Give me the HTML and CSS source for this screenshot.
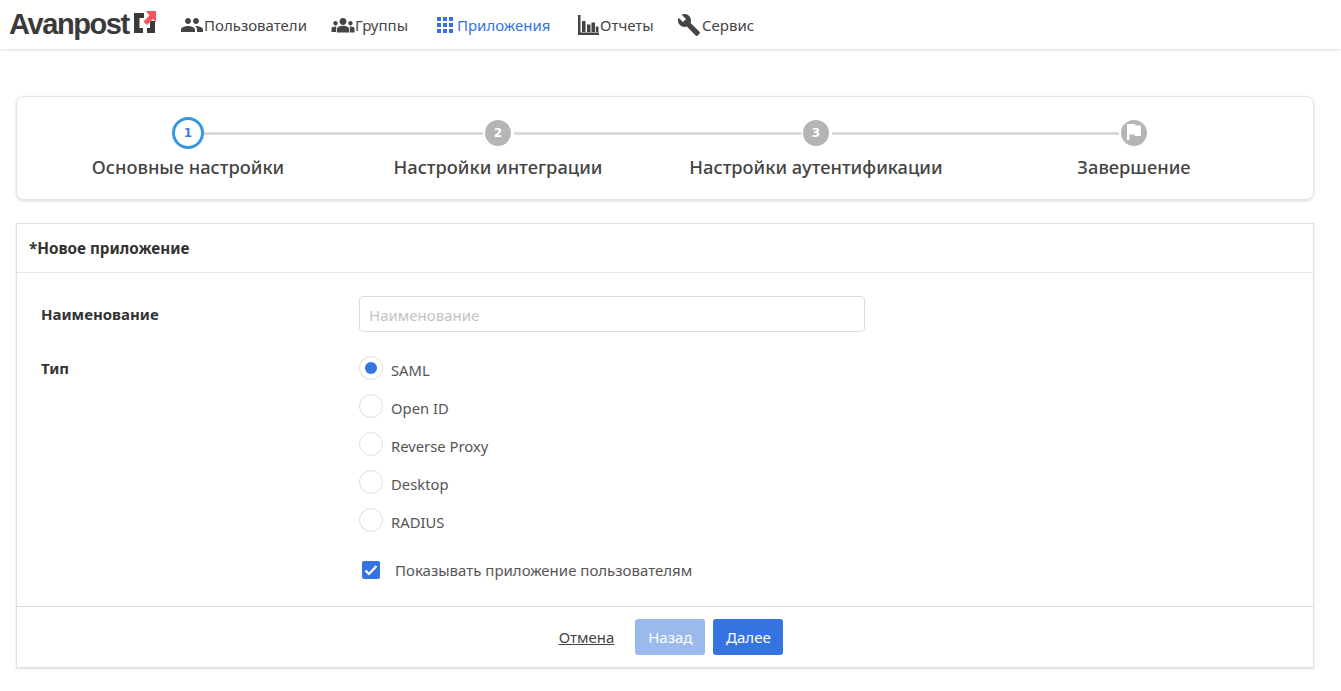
FILE: index.html
```html
<!DOCTYPE html>
<html lang="ru">
<head>
<meta charset="utf-8">
<title>Avanpost</title>
<link rel="stylesheet" href="styles.css">
</head>
<body>
<header class="topbar">
  <a class="logo"><span class="logo-text">Avanpost</span>
    <svg class="logo-mark" width="24" height="24" viewBox="0 0 24 24">
      <path fill="#3a3a3a" d="M1 3h10v5H6.500v10H10v5H1zM14 23v-5h3v-7h5v12z"/>
      <path fill="#f4525c" d="M13 1h10v11l-3-3-6 6-3.500-3.500 6-6z"/>
    </svg>
  </a>
  <nav class="nav">
    <a class="nav-item users">
      <svg width="24" height="24" viewBox="0 0 24 24"><path fill="#444" d="M16 11c1.660 0 2.990-1.340 2.990-3S17.660 5 16 5s-3 1.340-3 3 1.340 3 3 3zm-8 0c1.660 0 2.990-1.340 2.990-3S9.660 5 8 5 5 6.340 5 8s1.340 3 3 3zm0 2c-2.330 0-7 1.170-7 3.500V19h14v-2.500C15 14.170 10.330 13 8 13zm8 0c-.29 0-.62.020-.97.050 1.160.84 1.970 1.970 1.970 3.450V19h6v-2.500c0-2.330-4.670-3.500-7-3.500z"/></svg>
      <span>Пользователи</span>
    </a>
    <a class="nav-item groups">
      <svg width="26" height="24" viewBox="0 0 26 24"><path fill="#444" d="M13 12.800c1.700 0 3.200.4 4.400.95 1.100.5 1.800 1.600 1.800 2.850V19.500H6.800v-2.900c0-1.250.7-2.350 1.800-2.850 1.200-.55 2.700-.95 4.400-.95zM5.500 12.500c1.200 0 2.200-1 2.200-2.200S6.700 8 5.500 8s-2.200 1-2.200 2.300 1 2.200 2.200 2.200zm1.100 1.100c-.35-.05-.7-.1-1.100-.1-1 0-1.900.2-2.800.6-.75.3-1.200 1-1.200 1.800v3.100h4.500v-2.600c0-1.050.3-2 .6-2.800zM20.500 12.500c1.200 0 2.200-1 2.200-2.200S21.700 8 20.500 8s-2.200 1-2.200 2.300 1 2.200 2.200 2.200zm4 3.400c0-.8-.45-1.500-1.200-1.800-.9-.4-1.800-.6-2.800-.6-.4 0-.75.05-1.100.1.300.8.600 1.750.600 2.800v3.100h4.500zM13 5c1.930 0 3.500 1.570 3.500 3.500S14.930 12 13 12 9.500 10.430 9.500 8.500 11.070 5 13 5z"/></svg>
      <span>Группы</span>
    </a>
    <a class="nav-item apps active">
      <svg width="18" height="18" viewBox="0 0 18 18"><path fill="#3573e0" d="M1 1h4v4H1zM7 1h4v4H7zM13 1h4v4h-4zM1 7h4v4H1zM7 7h4v4H7zM13 7h4v4h-4zM1 13h4v4H1zM7 13h4v4H7zM13 13h4v4h-4z"/></svg>
      <span>Приложения</span>
    </a>
    <a class="nav-item reports">
      <svg width="22" height="22" viewBox="0 0 22 22"><path fill="#444" d="M1 1h2.500v17.500H22V21H1zM5 7h3.500v11H5zM10 10.500h3.500V18H10zM14.500 8.500H18V18h-3.500zM18.800 12.500H21.500V18h-2.700z"/></svg>
      <span>Отчеты</span>
    </a>
    <a class="nav-item service">
      <svg width="24" height="24" viewBox="0 0 24 24"><path fill="#444" d="M22.700 19l-9.100-9.100c.9-2.300.4-5-1.500-6.900-2-2-5-2.400-7.400-1.300L9 6 6 9 1.600 4.700C.4 7.100.9 10.100 2.900 12.100c1.900 1.900 4.600 2.400 6.900 1.500l9.100 9.100c.4.4 1 .4 1.400 0l2.300-2.300c.5-.4.5-1.100.1-1.400z"/></svg>
      <span>Сервис</span>
    </a>
  </nav>
</header>

<main class="page">
  <section class="wizard">
    <div class="step step-1">
      <div class="track"><span class="dot current">1</span></div>
      <div class="step-label">Основные настройки</div>
    </div>
    <div class="step step-2">
      <div class="track"><span class="dot">2</span></div>
      <div class="step-label">Настройки интеграции</div>
    </div>
    <div class="step step-3">
      <div class="track"><span class="dot">3</span></div>
      <div class="step-label">Настройки аутентификации</div>
    </div>
    <div class="step step-4">
      <div class="track"><span class="dot">
        <svg width="18" height="18" viewBox="0 0 18 18"><path fill="#fff" d="M2 0h8l.6 1.500H16V12h-6l-.5-1.500H4.500V16H2z"/></svg>
      </span></div>
      <div class="step-label">Завершение</div>
    </div>
  </section>

  <section class="panel">
    <h2 class="panel-title">*Новое приложение</h2>
    <form class="panel-body">
      <div class="row row-name">
        <label class="field-label">Наименование</label>
        <input class="text-input" type="text" placeholder="Наименование">
      </div>
      <div class="row row-type">
        <span class="field-label">Тип</span>
        <div class="radios">
          <div class="radio checked"><span class="radio-box"></span><span>SAML</span></div>
          <div class="radio"><span class="radio-box"></span><span>Open ID</span></div>
          <div class="radio"><span class="radio-box"></span><span>Reverse Proxy</span></div>
          <div class="radio"><span class="radio-box"></span><span>Desktop</span></div>
          <div class="radio"><span class="radio-box"></span><span>RADIUS</span></div>
        </div>
      </div>
      <div class="row row-check">
        <span class="field-label"></span>
        <div class="check">
          <span class="check-box"><svg width="16" height="16" viewBox="0 0 16 16"><path fill="none" stroke="#fff" stroke-width="2.200" d="M2.500 8.500l3.500 3.500 7.500-8"/></svg></span>
          <span>Показывать приложение пользователям</span>
        </div>
      </div>
    </form>
    <footer class="panel-footer">
      <a class="cancel">Отмена</a>
      <button class="btn btn-disabled" type="button">Назад</button>
      <button class="btn" type="button">Далее</button>
    </footer>
  </section>
</main>
</body>
</html>
```
FILE: styles.css
```css
* { box-sizing: border-box; }
html, body { margin: 0; padding: 0; }
body {
  font-family: "Noto Sans", "Open Sans", sans-serif;
  font-size: 15px;
  color: #444;
  background: #fff;
  height: 691px;
  overflow: hidden;
}
.topbar {
  height: 49px;
  display: flex;
  align-items: center;
  box-shadow: 0 1px 3px rgba(0,0,0,.14);
  padding-left: 9px;
}
.logo { display: flex; align-items: center; width: 171px; height: 49px; }
.logo-text {
  font-family: "Liberation Sans", sans-serif;
  font-size: 29px;
  font-weight: 700;
  letter-spacing: -1.4px;
  color: #3a3a3a;
  line-height: 49px;
}
.logo-mark { margin: -5px 0 0 4px; }
.nav { display: flex; align-items: center; height: 49px; }
.nav-item { display: flex; align-items: center; color: #444; font-size: 15px; white-space: nowrap; }
.nav-item.active { color: #3573e0; }
.users { width: 150px; }
.groups { width: 106px; }
.groups svg { margin-right: -1px; }
.apps { width: 141px; }
.apps svg { margin-right: 3px; margin-left: 0; }
.reports { width: 100px; }
.reports svg { margin-right: 1px; }
.service svg { margin-right: 1px; }
.page { padding: 47px 27px 0 16px; }
.wizard {
  height: 104px;
  border: 1px solid #e4e4e4;
  border-radius: 8px;
  box-shadow: 0 1px 3px rgba(0,0,0,.16);
  display: grid;
  grid-template-columns: 310px 318px 318px 1fr;
  padding: 21px 0 0 15px;
}
.step { display: flex; flex-direction: column; align-items: center; width: 312px; position: relative; }
.track { height: 30px; display: flex; justify-content: center; align-items: center; width: 100%; }
.step:not(.step-4) .track::after {
  content: "";
  position: absolute;
  top: 14px;
  left: 172px;
  height: 3px;
  background: #dadada;
}
.step-1 .track::after { width: 279px; }
.step-2 .track::after { width: 288px; }
.step-3 .track::after { width: 287px; }
.dot {
  width: 26px;
  height: 26px;
  border-radius: 50%;
  background: #b5b5b5;
  color: #fff;
  font-family: "DejaVu Sans", sans-serif;
  font-size: 12px;
  font-weight: 700;
  display: flex;
  align-items: center;
  justify-content: center;
}
.dot.current {
  width: 32px;
  height: 32px;
  background: #fff;
  border: 3px solid #3498e0;
  color: #3b82d8;
}
.step-label { margin-top: 7px; font-size: 18.3px; font-weight: 500; line-height: 24px; color: #444; white-space: nowrap; }
.panel {
  margin-top: 23px;
  height: 445px;
  border: 1px solid #e0e0e0;
  box-shadow: 0 1px 2px rgba(0,0,0,.12);
  display: flex;
  flex-direction: column;
}
.panel-title {
  margin: 0;
  height: 49px;
  border-bottom: 1px solid #e6e6e6;
  padding-left: 12px;
  font-size: 15.25px;
  font-weight: 700;
  line-height: 49px;
  color: #333;
}
.panel-body { flex: 1; padding: 23px 0 0 24px; }
.row { display: flex; }
.field-label { width: 318px; flex: none; font-size: 15px; font-weight: 700; color: #333; line-height: 36px; }
.text-input {
  width: 506px;
  height: 36px;
  border: 1px solid #dcdcdc;
  border-radius: 4px;
  padding: 1px 9px 0;
  font: 15px "Noto Sans", sans-serif;
  color: #444;
  outline: none;
}
.text-input::placeholder { color: #c4c4c4; }
.row-type { margin-top: 18px; }
.radios { display: flex; flex-direction: column; gap: 12px; margin-top: 5px; }
.radio { display: flex; align-items: center; height: 26px; font-size: 14.8px; color: #555; }
.radio span:last-child { margin-top: 4px; }
.radio-box {
  width: 24px;
  height: 24px;
  border-radius: 50%;
  border: 1px solid #dedede;
  background: #fff;
  margin-right: 8px;
  position: relative;
  flex: none;
}
.radio.checked .radio-box::after {
  content: "";
  position: absolute;
  left: 5px;
  top: 5px;
  width: 12px;
  height: 12px;
  border-radius: 50%;
  background: #3573e0;
}
.row-check { margin-top: 24px; }
.check { display: flex; align-items: center; height: 26px; margin-left: 3px; font-size: 15px; color: #555; }
.check-box {
  width: 18px;
  height: 18px;
  background: #3573e0;
  border-radius: 2px;
  display: flex;
  align-items: center;
  justify-content: center;
  margin-right: 15px;
}
.panel-footer {
  height: 61px;
  border-top: 1px solid #dcdcdc;
  display: flex;
  align-items: flex-start;
  justify-content: center;
  padding: 12px 0 0 12px;
  gap: 8px;
  font-size: 15px;
}
.cancel { color: #444; text-decoration: underline; line-height: 37px; margin-right: 13px; }
.btn {
  width: 70px;
  height: 36px;
  border: 0;
  border-radius: 3px;
  background: #3573e0;
  color: #fff;
  font: 15px "Noto Sans", sans-serif;
  padding: 0;
}
.btn-disabled { background: #9ab9ec; }
```
